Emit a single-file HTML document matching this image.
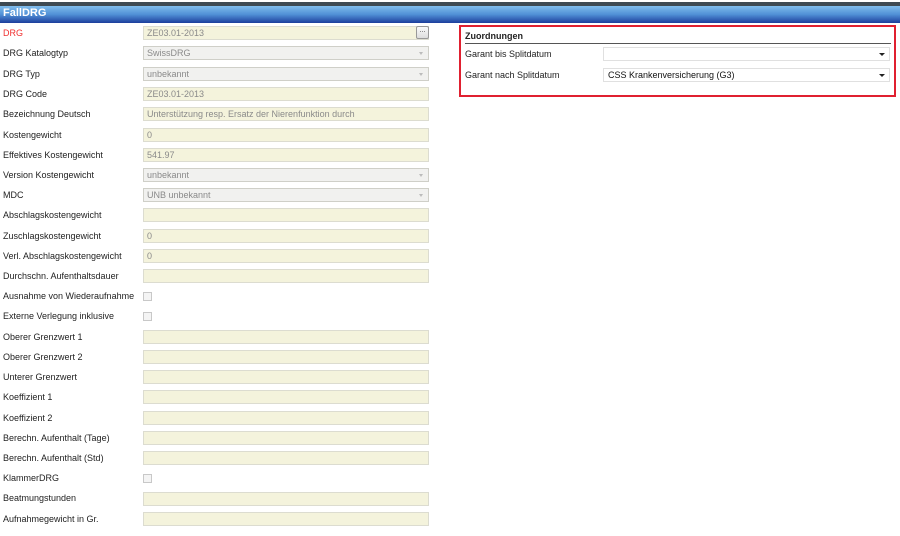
<!DOCTYPE html>
<html><head><meta charset="utf-8"><style>
*{margin:0;padding:0;box-sizing:border-box}
body{width:900px;height:536px;background:#fff;font-family:"Liberation Sans",Arial,sans-serif;font-size:9px;color:#222;position:relative;overflow:hidden}
.topbar{position:absolute;left:0;top:2px;width:900px;height:4px;background:#3e4a52}
.title{position:absolute;left:0;top:6px;width:900px;height:17px;background:linear-gradient(#80bdec,#5090d6 50%,#1c3e9c);color:#fff;font-weight:bold;font-size:11px;line-height:15px;padding-left:3px}
.l{position:absolute;left:3px;line-height:12px}
.i{position:absolute;left:143px;width:286px;height:14px;background:#f4f3dc;border:1px solid #dcdcd0;color:#8a8a8a;padding-left:3px;line-height:12px}
.s{background:#f1f1ef;border-color:#cfcfc8}
.s:after{content:"";position:absolute;right:5px;top:5px;border:2.5px solid transparent;border-top:3px solid #bbb}
.cb{position:absolute;left:143px;width:9px;height:9px;border:1px solid #c8c8c8;background:#f4f4f4}
.btn{position:absolute;left:416px;top:26px;width:13px;height:13px;border:1px solid #999;border-radius:2px;background:linear-gradient(#fafafa,#ddd);font-size:7px;line-height:8px;text-align:center;color:#333}
.box{position:absolute;left:459px;top:25px;width:437px;height:72px;border:2px solid #e02030}
.box .h{position:absolute;left:4px;top:3px;font-weight:bold;width:426px;border-bottom:1px solid #555;height:14px;line-height:12px}
.box .r{position:absolute;left:4px}
.sel{position:absolute;left:142px;width:287px;height:14px;border:1px solid #e0e0e0;background:#fff;padding-left:4px;line-height:12px;color:#111}
.sel:after{content:"";position:absolute;right:4px;top:5px;border:3px solid transparent;border-top:3.5px solid #222}
</style></head><body>
<div class="topbar"></div>
<div class="title">FallDRG</div>

<div class="l" style="top:27px;color:#f03030">DRG</div><div class="i" style="top:26px">ZE03.01-2013</div><div class="btn">...</div>
<div class="l" style="top:47px">DRG Katalogtyp</div><div class="i s" style="top:46px">SwissDRG</div>
<div class="l" style="top:68px">DRG Typ</div><div class="i s" style="top:67px">unbekannt</div>
<div class="l" style="top:88px">DRG Code</div><div class="i" style="top:87px">ZE03.01-2013</div>
<div class="l" style="top:108px">Bezeichnung Deutsch</div><div class="i" style="top:107px">Unterstützung resp. Ersatz der Nierenfunktion durch</div>
<div class="l" style="top:129px">Kostengewicht</div><div class="i" style="top:128px">0</div>
<div class="l" style="top:149px">Effektives Kostengewicht</div><div class="i" style="top:148px">541.97</div>
<div class="l" style="top:169px">Version Kostengewicht</div><div class="i s" style="top:168px">unbekannt</div>
<div class="l" style="top:189px">MDC</div><div class="i s" style="top:188px">UNB unbekannt</div>
<div class="l" style="top:209px">Abschlagskostengewicht</div><div class="i" style="top:208px"></div>
<div class="l" style="top:230px">Zuschlagskostengewicht</div><div class="i" style="top:229px">0</div>
<div class="l" style="top:250px">Verl. Abschlagskostengewicht</div><div class="i" style="top:249px">0</div>
<div class="l" style="top:270px">Durchschn. Aufenthaltsdauer</div><div class="i" style="top:269px"></div>
<div class="l" style="top:290px">Ausnahme von Wiederaufnahme</div><div class="cb" style="top:292px"></div>
<div class="l" style="top:310px">Externe Verlegung inklusive</div><div class="cb" style="top:312px"></div>
<div class="l" style="top:331px">Oberer Grenzwert 1</div><div class="i" style="top:330px"></div>
<div class="l" style="top:351px">Oberer Grenzwert 2</div><div class="i" style="top:350px"></div>
<div class="l" style="top:371px">Unterer Grenzwert</div><div class="i" style="top:370px"></div>
<div class="l" style="top:391px">Koeffizient 1</div><div class="i" style="top:390px"></div>
<div class="l" style="top:412px">Koeffizient 2</div><div class="i" style="top:411px"></div>
<div class="l" style="top:432px">Berechn. Aufenthalt (Tage)</div><div class="i" style="top:431px"></div>
<div class="l" style="top:452px">Berechn. Aufenthalt (Std)</div><div class="i" style="top:451px"></div>
<div class="l" style="top:472px">KlammerDRG</div><div class="cb" style="top:474px"></div>
<div class="l" style="top:492px">Beatmungstunden</div><div class="i" style="top:492px"></div>
<div class="l" style="top:513px">Aufnahmegewicht in Gr.</div><div class="i" style="top:512px"></div>

<div class="box">
<div class="h">Zuordnungen</div>
<div class="r" style="top:22px">Garant bis Splitdatum</div><div class="sel" style="top:20px"></div>
<div class="r" style="top:43px">Garant nach Splitdatum</div><div class="sel" style="top:41px">CSS Krankenversicherung (G3)</div>
</div>
</body></html>
